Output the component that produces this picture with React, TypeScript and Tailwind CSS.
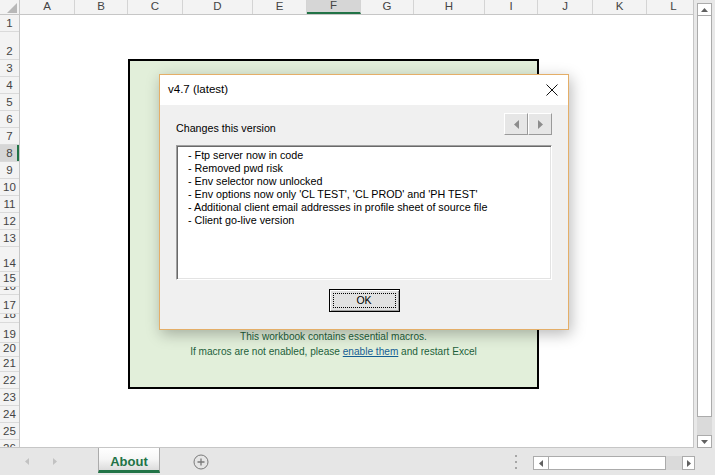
import React from 'react'

const COLS = [
  { name: 'A', w: 'w-[55px]' },
  { name: 'B', w: 'w-[53px]' },
  { name: 'C', w: 'w-[55px]' },
  { name: 'D', w: 'w-[70px]' },
  { name: 'E', w: 'w-[54px]' },
  { name: 'F', w: 'w-[54px]', selected: true },
  { name: 'G', w: 'w-[53px]' },
  { name: 'H', w: 'w-[71px]' },
  { name: 'I', w: 'w-[53px]' },
  { name: 'J', w: 'w-[55px]' },
  { name: 'K', w: 'w-[54px]' },
  { name: 'L', w: 'w-[54px]' },
]

const ROWS = [
  { n: 1, h: 'h-[17px]' },
  { n: 2, h: 'h-[28px]' },
  { n: 3, h: 'h-[17px]' },
  { n: 4, h: 'h-[17px]' },
  { n: 5, h: 'h-[17px]' },
  { n: 6, h: 'h-[17px]' },
  { n: 7, h: 'h-[17px]' },
  { n: 8, h: 'h-[17px]', selected: true },
  { n: 9, h: 'h-[17px]' },
  { n: 10, h: 'h-[17px]' },
  { n: 11, h: 'h-[17px]' },
  { n: 12, h: 'h-[17px]' },
  { n: 13, h: 'h-[17px]' },
  { n: 14, h: 'h-[25px]' },
  { n: 15, h: 'h-[15px]' },
  { n: 16, h: 'h-[8px]' },
  { n: 17, h: 'h-[19px]' },
  { n: 18, h: 'h-[9px]' },
  { n: 19, h: 'h-[20px]' },
  { n: 20, h: 'h-[14px]' },
  { n: 21, h: 'h-[15px]' },
  { n: 22, h: 'h-[17px]' },
  { n: 23, h: 'h-[17px]' },
  { n: 24, h: 'h-[17px]' },
  { n: 25, h: 'h-[17px]' },
  { n: 26, h: 'h-[17px]' },
]

const CHANGES = [
  '- Ftp server now in code',
  '- Removed pwd risk',
  '- Env selector now unlocked',
  "- Env options now only 'CL TEST', 'CL PROD' and 'PH TEST'",
  '- Additional client email addresses in profile sheet of source file',
  '- Client go-live version',
]

function Tri({ dir, color = '#606060', w = 7, h = 4 }: { dir: 'up' | 'down' | 'left' | 'right'; color?: string; w?: number; h?: number }) {
  const d =
    dir === 'up'
      ? `M0 ${h} L${w / 2} 0 L${w} ${h} Z`
      : dir === 'down'
        ? `M0 0 L${w} 0 L${w / 2} ${h} Z`
        : dir === 'left'
          ? `M${w} 0 L0 ${h / 2} L${w} ${h} Z`
          : `M0 0 L${w} ${h / 2} L0 ${h} Z`
  return (
    <svg width={w} height={h} viewBox={`0 0 ${w} ${h}`}>
      <path d={d} fill={color} />
    </svg>
  )
}

function ColumnHeader() {
  return (
    <div className="h-[15px] shrink-0 flex bg-[#f3f3f3] border-b border-[#c6c6c6] overflow-hidden">
      <div className="w-[20px] shrink-0 h-full border-r border-[#c6c6c6] flex items-end justify-end pr-[2px] pb-[1px]">
        <svg width="10" height="10" viewBox="0 0 10 10">
          <path d="M10 0 L10 10 L0 10 Z" fill="#b8b8b8" />
        </svg>
      </div>
      {COLS.map((c) => (
        <div
          key={c.name}
          className={`${c.w} shrink-0 h-full border-r border-[#d4d4d4] flex items-center justify-center text-[11.5px] leading-none text-[#444] ${
            c.selected ? 'bg-[#d6d6d6] border-b-2 border-b-[#217346]' : ''
          }`}
        >
          {c.name}
        </div>
      ))}
    </div>
  )
}

function RowHeader() {
  return (
    <div className="w-[20px] shrink-0 bg-[#f3f3f3] border-r border-[#c6c6c6] flex flex-col overflow-hidden">
      {ROWS.map((r) => (
        <div
          key={r.n}
          className={`${r.h} shrink-0 border-b border-[#dadada] flex items-end justify-center pb-[1px] overflow-hidden text-[11.5px] leading-[13px] text-[#444] ${
            r.selected ? 'bg-[#d6d6d6] shadow-[inset_-2px_0_0_#217346]' : ''
          }`}
        >
          {r.n}
        </div>
      ))}
    </div>
  )
}

function NavButton({ dir }: { dir: 'left' | 'right' }) {
  return (
    <div className="w-[24px] h-[22px] bg-[#e6e6e6] border border-t-white border-l-white border-r-[#9a9a9a] border-b-[#9a9a9a] flex items-center justify-center">
      <Tri dir={dir} color="#8c8c8c" w={5} h={9} />
    </div>
  )
}

function ChangesDialog() {
  return (
    <div className="absolute left-[159px] top-[59px] w-[410px] h-[256px] flex flex-col border border-[#e4ae68] bg-[#f0f0f0] shadow-[2px_4px_14px_rgba(0,0,0,0.28)]">
      <div className="h-[30px] shrink-0 bg-white flex items-center justify-between pl-[8px] pr-[10px]">
        <span className="text-[11.5px] text-black">v4.7 (latest)</span>
        <svg width="12" height="12" viewBox="0 0 12 12">
          <path d="M0.5 0.5 L11.5 11.5 M11.5 0.5 L0.5 11.5" stroke="#111" strokeWidth="1" />
        </svg>
      </div>
      <div className="flex-1 px-[16px] flex flex-col">
        <div className="mt-[8px] h-[22px] flex justify-between">
          <span className="pt-[9px] text-[10.7px] leading-[13px] text-black">Changes this version</span>
          <div className="flex">
            <NavButton dir="left" />
            <NavButton dir="right" />
          </div>
        </div>
        <div className="mt-[10px] h-[135px] bg-white border border-t-[#a0a0a0] border-l-[#a0a0a0] border-r-white border-b-white shadow-[inset_1px_1px_0_#696969,inset_-1px_-1px_0_#e3e3e3] pl-[11px] pt-[3px] text-[10.75px] leading-[13px] text-black">
          {CHANGES.map((line) => (
            <div key={line} className="whitespace-pre">{line}</div>
          ))}
        </div>
        <div className="mt-[9px] flex justify-center">
          <div className="w-[71px] h-[23px] border border-black bg-[#e1e1e1] shadow-[inset_1px_1px_0_#fff,inset_-1px_-1px_0_#a0a0a0] p-[3px]">
            <div className="h-full border border-dotted border-black flex items-center justify-center text-[10.5px] text-black">
              OK
            </div>
          </div>
        </div>
      </div>
    </div>
  )
}

function MacroNotice() {
  return (
    <div className="absolute left-[128px] top-[44px] w-[411px] h-[330px] border-2 border-black bg-[#e2efda] flex flex-col items-center justify-end pb-[28px] text-[10.1px] leading-[15px] text-[#1d5f3a]">
      <p>This workbook contains essential macros.</p>
      <p>
        If macros are not enabled, please <span className="underline text-[#155e93]">enable them</span> and restart Excel
      </p>
    </div>
  )
}

function VerticalScroll() {
  return (
    <div className="w-[21px] shrink-0 pt-[3px] pl-[3px] flex flex-col bg-[#e8e8e8]">
      <div className="w-[15px] h-[13px] bg-white border border-[#ababab] flex items-center justify-center">
        <Tri dir="up" />
      </div>
      <div className="w-[15px] h-[401px] bg-white border-x border-b border-[#ababab]" />
      <div className="w-[15px] h-[18px] bg-[#dadada]" />
      <div className="w-[15px] h-[13px] bg-white border border-[#ababab] flex items-center justify-center">
        <Tri dir="down" />
      </div>
    </div>
  )
}

function SheetTabs() {
  return (
    <div className="h-[27px] shrink-0 flex items-start bg-[#e6e6e6]">
      <div className="w-[98px] h-full flex items-center pl-[25px] gap-[24px]">
        <Tri dir="left" color="#c2c2c2" w={4} h={7} />
        <Tri dir="right" color="#c2c2c2" w={4} h={7} />
      </div>
      <div className="w-[62px] h-[25px] pt-[6px] bg-gradient-to-b from-white via-[#f6f6f6] to-[#dcdcdc] border-x border-[#ababab] border-b-[3px] border-b-[#217346] flex items-center justify-center text-[13px] font-bold text-[#217346]">
        About
      </div>
      <div className="ml-[33px] mt-[6px]">
        <svg width="16" height="16" viewBox="0 0 16 16">
          <circle cx="8" cy="8" r="7" fill="none" stroke="#7a7a7a" strokeWidth="1" />
          <path d="M8 4.5 V11.5 M4.5 8 H11.5" stroke="#7a7a7a" strokeWidth="1.3" />
        </svg>
      </div>
      <div className="ml-[306px] mt-[7px] flex flex-col gap-[4px]">
        <div className="w-[2px] h-[2px] bg-[#a6a6a6]" />
        <div className="w-[2px] h-[2px] bg-[#a6a6a6]" />
        <div className="w-[2px] h-[2px] bg-[#a6a6a6]" />
      </div>
      <div className="ml-[16px] mt-[8px] flex h-[14px]">
        <div className="w-[16px] h-full bg-white border border-[#ababab] flex items-center justify-center">
          <Tri dir="left" w={4} h={7} />
        </div>
        <div className="w-[117px] h-full bg-white border-y border-r border-[#ababab]" />
        <div className="w-[16px] h-full bg-[#dadada]" />
        <div className="w-[13px] h-full bg-white border border-[#ababab] flex items-center justify-center">
          <Tri dir="right" w={4} h={7} />
        </div>
      </div>
    </div>
  )
}

export default function App() {
  return (
    <div className="w-[715px] h-[475px] flex flex-col overflow-hidden bg-[#e6e6e6] font-['Liberation_Sans',Arial,sans-serif]">
      <div className="h-[448px] shrink-0 flex">
        <div className="w-[694px] shrink-0 flex flex-col border-r border-b border-[#c6c6c6] bg-white">
          <ColumnHeader />
          <div className="flex-1 min-h-0 relative flex">
            <RowHeader />
            <div className="flex-1 bg-white" />
            <MacroNotice />
            <ChangesDialog />
          </div>
        </div>
        <VerticalScroll />
      </div>
      <SheetTabs />
    </div>
  )
}
